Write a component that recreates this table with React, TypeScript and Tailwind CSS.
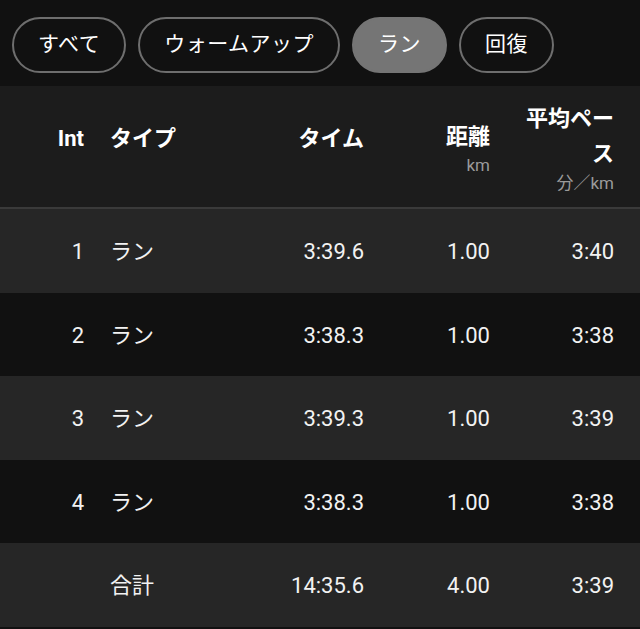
import { useState } from 'react'

const font = { fontFamily: 'Roboto, "Noto Sans CJK JP", sans-serif' }

type Lap = { int: string; type: string; time: string; dist: string; pace: string }

const laps: Lap[] = [
  { int: '1', type: 'ラン', time: '3:39.6', dist: '1.00', pace: '3:40' },
  { int: '2', type: 'ラン', time: '3:38.3', dist: '1.00', pace: '3:38' },
  { int: '3', type: 'ラン', time: '3:39.3', dist: '1.00', pace: '3:39' },
  { int: '4', type: 'ラン', time: '3:38.3', dist: '1.00', pace: '3:38' },
  { int: '', type: '合計', time: '14:35.6', dist: '4.00', pace: '3:39' },
]

const filters = ['すべて', 'ウォームアップ', 'ラン', '回復']

function Chip({ label, active, onClick }: { label: string; active: boolean; onClick: () => void }) {
  return (
    <button
      onClick={onClick}
      className={
        active
          ? 'h-[56px] rounded-full border-2 border-[#757575] bg-[#757575] px-[24px] text-[21px] tracking-[0.5px] text-white'
          : 'h-[56px] rounded-full border-2 border-[#6e6e6e] bg-[#111111] px-[24px] text-[21px] tracking-[0.5px] text-white'
      }
    >
      {label}
    </button>
  )
}

function Row({ lap, shade }: { lap: Lap; shade: boolean }) {
  return (
    <div
      className={
        shade
          ? 'flex h-[83.5px] items-center bg-[#262626] pt-[2px] text-[22px] text-[#f2f2f2]'
          : 'flex h-[83.5px] items-center bg-[#111111] pt-[2px] text-[22px] text-[#f2f2f2]'
      }
    >
      <div className="w-[84px] text-right">{lap.int}</div>
      <div className="ml-[26px] w-[150px]">{lap.type}</div>
      <div className="w-[104px] text-right">{lap.time}</div>
      <div className="w-[126px] text-right">{lap.dist}</div>
      <div className="w-[124px] text-right">{lap.pace}</div>
    </div>
  )
}

export default function App() {
  const [active, setActive] = useState('ラン')

  return (
    <div className="h-[629px] w-[640px] overflow-hidden bg-[#111111]" style={font}>
      <div className="flex h-[86px] items-start gap-[12px] pl-[12px] pt-[17px]">
        {filters.map((f) => (
          <Chip key={f} label={f} active={f === active} onClick={() => setActive(f)} />
        ))}
      </div>

      <div className="flex h-[123px] border-b-2 border-[#3a3a3a] bg-[#1c1c1c] text-[22px] font-bold text-white">
        <div className="w-[84px] pt-[36px] text-right">Int</div>
        <div className="ml-[26px] w-[150px] pt-[36px]">タイプ</div>
        <div className="w-[104px] pt-[36px] text-right">タイム</div>
        <div className="flex w-[126px] flex-col items-end pt-[36px]">
          <span className="leading-[30px]">距離</span>
          <span className="text-[17px] font-normal leading-[26px] text-[#9a9a9a]">km</span>
        </div>
        <div className="flex w-[124px] flex-col items-end pt-[15px]">
          <span className="w-[100px] text-right leading-[35px]">平均ペース</span>
          <span className="text-[17px] font-normal leading-[24px] text-[#9a9a9a]">分／km</span>
        </div>
      </div>

      {laps.map((lap, i) => (
        <Row key={i} lap={lap} shade={i % 2 === 0} />
      ))}
    </div>
  )
}
